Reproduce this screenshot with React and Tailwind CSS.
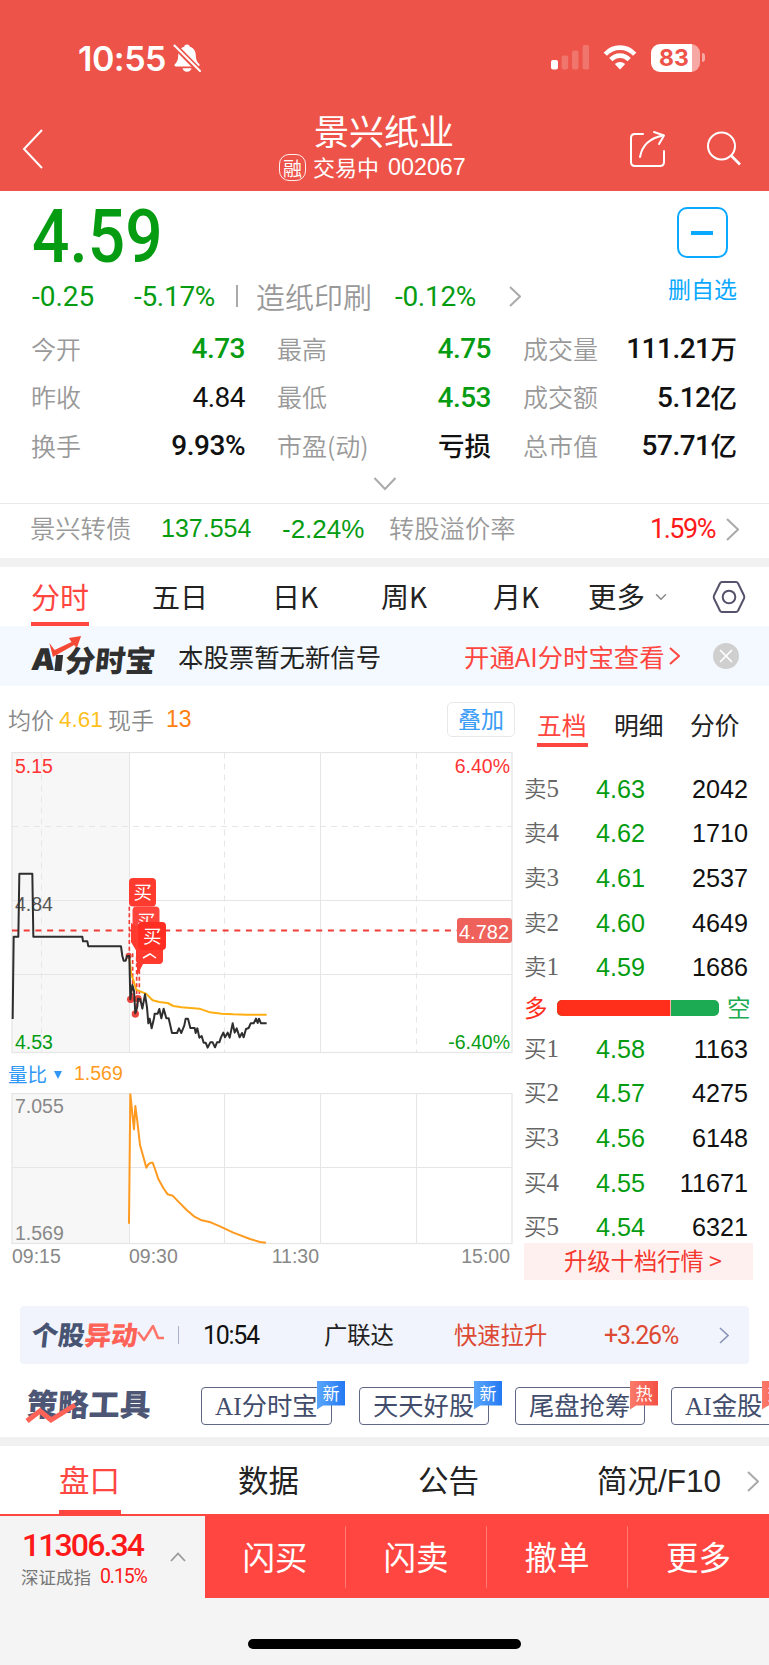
import { ChevronDown, X } from 'lucide-react';

const quoteRows = [
  [
    { label: '今开', value: '4.73', tone: 'text-[#059c12] font-medium' },
    { label: '最高', value: '4.75', tone: 'text-[#059c12] font-medium' },
    { label: '成交量', value: '111.21', unit: '万', tone: 'text-[#111] font-medium' },
  ],
  [
    { label: '昨收', value: '4.84', tone: 'text-[#111]' },
    { label: '最低', value: '4.53', tone: 'text-[#059c12] font-medium' },
    { label: '成交额', value: '5.12', unit: '亿', tone: 'text-[#111] font-medium' },
  ],
  [
    { label: '换手', value: '9.93%', tone: 'text-[#111] font-medium' },
    { label: '市盈(动)', value: '', unit: '亏损', tone: 'text-[#111] font-medium' },
    { label: '总市值', value: '57.71', unit: '亿', tone: 'text-[#111] font-medium' },
  ],
];

const asks = [
  ['5', '4.63', '2042'],
  ['4', '4.62', '1710'],
  ['3', '4.61', '2537'],
  ['2', '4.60', '4649'],
  ['1', '4.59', '1686'],
];

const bids = [
  ['1', '4.58', '1163'],
  ['2', '4.57', '4275'],
  ['3', '4.56', '6148'],
  ['4', '4.55', '11671'],
  ['5', '4.54', '6321'],
];

const tools = [
  { latin: 'AI', name: '分时宝', badge: '新', box: 'w-[131px] mr-[27px]' },
  { latin: '', name: '天天好股', badge: '新', box: 'w-[130px] mr-[26px]' },
  { latin: '', name: '尾盘抢筹', badge: '热', box: 'w-[130px] mr-[26px]' },
  { latin: 'AI', name: '金股', badge: '热', box: 'w-[106px]' },
];

const Arrow = ({ className, w = 12, h = 21, stroke = 2 }) => (
  <svg width={w} height={h} viewBox={`0 0 ${w} ${h}`} fill="none" stroke="currentColor" strokeWidth={stroke} className={`shrink-0 ${className}`}>
    <path d={`M1 1L${w - 1} ${h / 2}L1 ${h - 1}`} />
  </svg>
);

const StatusBar = () => (
  <div className="flex h-[109px] items-center pl-[78px] pt-[6px] text-white">
    <span className="w-[95px] whitespace-nowrap pt-[2px] font-[Inter] text-[34px] font-semibold tracking-[-0.500px]">10:55</span>
    <svg width="28" height="28" viewBox="0 0 28 28" fill="currentColor">
      <path d="M14 0.5C16 .5 16.8 1.7 16.8 2.8C21 4 22.7 7.2 22.8 11.5C23 16 24 18 26.2 20C27 21 26.5 22.5 25 22.5H3C1.5 22.5 1 21 2 20C4.200 18 5 16 5.200 11.500C5.400 7.200 7 4 11.200 2.800C11.200 1.700 12 .5 14 .5Z" />
      <path d="M9.500 24.300H18.500C18 26.500 16.500 27.700 14 27.700S10 26.500 9.500 24.300Z" />
      <path d="M1 1L27 27.500" stroke="#ed5349" strokeWidth="5.500" />
      <path d="M1.500 1.500L27 27" stroke="currentColor" strokeWidth="2" strokeLinecap="round" />
    </svg>
    <svg width="39" height="25" viewBox="0 0 39 25" fill="currentColor" className="ml-[350px]">
      <rect x="0" y="15" width="7" height="9.500" rx="2" />
      <g opacity=".2">
        <rect x="10.700" y="10.500" width="6.500" height="14" rx="2" />
        <rect x="21" y="5.500" width="6.500" height="19" rx="2" />
        <rect x="31.600" y="0" width="6.500" height="24.500" rx="2" />
      </g>
    </svg>
    <svg width="34" height="25" viewBox="0 0 34 25" className="ml-[13px]" fill="none" stroke="currentColor" strokeWidth="4.600">
      <path d="M2.300 9.200C10.500 .4 23.500 .4 31.700 9.200" />
      <path d="M7.800 14.700C13 9.300 21 9.300 26.200 14.700" />
      <path d="M17 24.500L11.800 19.100C14.800 16.300 19.200 16.300 22.200 19.100Z" fill="currentColor" stroke="none" />
    </svg>
    <div className="ml-[14px] flex h-[28px] w-[49px] items-center rounded-[9px] bg-[linear-gradient(90deg,#fff_84%,#f6a9a4_84%)] pl-[8px] pt-px font-[Inter] text-[23px] font-bold text-[#ed5349]">
      83
    </div>
    <div className="ml-[2px] h-[9px] w-[3px] rounded-r-full bg-[#f6a9a4]" />
  </div>
);

const TitleBar = () => (
  <div className="flex h-[82px] items-start text-white">
    <svg width="21" height="40" viewBox="0 0 21 40" fill="none" stroke="currentColor" strokeWidth="2" className="ml-[22px] mt-[20px]">
      <path d="M20 1L2 20L20 39" />
    </svg>
    <div className="ml-[236px] w-[207px]">
      <div className="mb-[4px] pl-[35px] text-[35px] leading-[42px]">景兴纸业</div>
      <div className="flex h-[24px] items-center">
        <span className="flex h-[27px] w-[27px] shrink-0 items-center justify-center rounded-[10px] border border-white/90 text-[19px] leading-none">融</span>
        <span className="mb-[3px] ml-[7px] text-[22px] leading-[24px]">交易中</span>
        <span className="ml-[9px] font-['Liberation_Sans'] text-[23.300px]">002067</span>
      </div>
    </div>
    <svg width="37" height="38" viewBox="0 0 37 38" fill="none" stroke="currentColor" strokeWidth="2" strokeLinejoin="round" strokeLinecap="round" className="ml-[143px] mt-[21px]">
      <path d="M14 4H6Q2 4 2 8V32Q2 36 6 36H31Q35 36 35 32V21" />
      <path d="M11 27C13 16 21 8 34 5.500" />
      <path d="M25 2L35 5.500L30 14" />
    </svg>
    <svg width="36" height="36" viewBox="0 0 36 36" fill="none" stroke="currentColor" strokeWidth="2" className="ml-[40px] mt-[22px]">
      <circle cx="15.500" cy="15" r="13.500" />
      <path d="M25 24.500L34 33.500" strokeWidth="2.600" />
    </svg>
  </div>
);

const Quote = () => (
  <section className="h-[312px] pt-[10px]">
    <div className="flex h-[118px] justify-between pl-[32px]">
      <div>
        <div className="h-[74px] w-[160px] origin-left scale-x-[.89] font-[Roboto] text-[74px] font-medium leading-[72px] text-[#059c12]">4.59</div>
        <div className="flex h-[43px] items-center font-[Roboto] text-[28px] font-[450] text-[#059c12]">
          <span className="w-[102px] pt-px">-0.25</span>
          <span className="w-[102px] pt-px tracking-[-0.300px]">-5.17%</span>
          <span className="mb-[2px] h-[22px] w-[20px] border-l-2 border-[#aaa]" />
          <span className="w-[139px] whitespace-nowrap font-['Noto_Sans_CJK_SC'] text-[29px] font-[350] text-[#999]">造纸印刷</span>
          <span className="w-[114px] pt-px tracking-[-0.300px]">-0.12%</span>
          <Arrow className="text-[#aaa]" />
        </div>
      </div>
      <div className="flex w-[133px] flex-col items-center pt-[6px] text-[#0aa9ff]">
        <div className="mr-px flex h-[51px] w-[51px] items-center justify-center rounded-[10px] border-2 border-[#0aa9ff]">
          <div className="h-[4px] w-[22px] bg-[#0aa9ff]" />
        </div>
        <span className="mt-[15px] text-[23px] leading-[31px]">删自选</span>
      </div>
    </div>
    <div className="mt-[6px]">
      {quoteRows.map((row) => (
        <div key={row[0].label} className="flex h-[48.500px] items-center pl-[31px]">
          {row.map((item) => (
            <div key={item.label} className="mr-[32px] flex w-[214px] items-center justify-between">
              <span className="mb-[2px] whitespace-nowrap text-[25px] font-[350] text-[#999]">{item.label}</span>
              <span className={`flex items-center whitespace-nowrap font-[Roboto] text-[28px] leading-[40px] tracking-[-0.500px] ${item.tone}`}>
                {item.value}
                {item.unit && <span className="mb-[2px] font-['Noto_Sans_CJK_SC'] text-[26.500px] tracking-normal">{item.unit}</span>}
              </span>
            </div>
          ))}
        </div>
      ))}
    </div>
    <svg width="24" height="14" viewBox="0 0 24 14" fill="none" stroke="#aaa" strokeWidth="2" className="mx-auto mt-[6px]">
      <path d="M1.500 1L12 12L22.500 1" />
    </svg>
  </section>
);

const BondRow = () => (
  <section className="flex h-[55px] items-center border-t border-[#e8e8e8] pl-[30px] pb-[4px] text-[25.300px] font-[350] text-[#999]">
    <span className="mb-[2px] w-[131px]">景兴转债</span>
    <span className="w-[121px] font-['Liberation_Sans'] text-[25px] text-[#059c12]">137.554</span>
    <span className="w-[107px] font-['Liberation_Sans'] text-[26px] text-[#059c12]">-2.24%</span>
    <span className="mb-[2px] w-[261px]">转股溢价率</span>
    <span className="w-[76px] font-[Roboto] text-[27px] font-[450] tracking-[-1.500px] text-[#ff1a1a]">1.59%</span>
    <Arrow className="text-[#aaa]" w={13} h={23} />
  </section>
);

const PeriodTabs = () => (
  <nav className="flex h-[59px] pl-[31px] text-[28px] leading-[58px] text-[#222]">
    <div className="mr-[63px] h-[59px] w-[58px] whitespace-nowrap border-b-4 border-[#ff4640] text-[29px] text-[#ff4640]">分时</div>
    <span className="w-[120px]">五日</span>
    <span className="w-[109px]">日K</span>
    <span className="w-[112px]">周K</span>
    <span className="w-[95px]">月K</span>
    <span className="w-[64px] text-[28.500px]">更多</span>
    <ChevronDown size={18} strokeWidth={2} className="mt-[21px] text-[#888]" />
    <svg width="34" height="34" viewBox="0 0 34 34" fill="none" stroke="#55536b" strokeWidth="2" className="ml-[42px] mt-[13px]" strokeLinejoin="round">
      <path d="M10 2H24Q25.300 2 26 3.200L32 15.500Q32.600 17 32 18.500L26 30.800Q25.300 32 24 32H10Q8.700 32 8 30.800L2 18.500Q1.400 17 2 15.500L8 3.200Q8.700 2 10 2Z" />
      <circle cx="17" cy="17" r="6.300" />
    </svg>
  </nav>
);

const SignalBanner = () => (
  <section className="flex h-[60px] items-center bg-[#f3f9fe] pl-[31px]">
    <div className="relative flex h-[40px] w-[147px] -skew-x-6 items-center pt-[6px] font-black text-[#303030]">
      <span className="pl-px font-[Inter] text-[30px]">A</span>
      <span className="mt-[8px] inline-block h-[16px] w-[7px] bg-[#303030]" />
      <span className="ml-[3px] whitespace-nowrap text-[30px]">分时宝</span>
      <svg width="38" height="24" viewBox="0 0 38 24" className="absolute left-[14px] top-0" fill="#f44a35">
        <path d="M3 7L9 14L25 6L22 2L34 0L31 12L28 9L8 21Z" />
      </svg>
    </div>
    <span className="w-[286px] whitespace-nowrap text-[25.400px] text-[#222]">本股票暂无新信号</span>
    <span className="w-[205px] whitespace-nowrap text-[25.400px] text-[#ff4640]">开通AI分时宝查看</span>
    <Arrow className="text-[#ff4640]" w={11} h={18} />
    <span className="ml-[33px] flex h-[26px] w-[26px] items-center justify-center rounded-full bg-[#cfcfcf] text-white">
      <X size={22} strokeWidth={1.800} />
    </span>
  </section>
);

const BuyTag = ({ x, y, opacity = 0.95 }) => (
  <g>
    <rect x={x} y={y} width="27" height="28.500" rx="4" fill="#ff3b30" opacity={opacity} />
    <text x={x + 4.500} y={y + 21} fontSize="18.500" fill="#fff">买</text>
  </g>
);

const PriceChart = () => (
  <svg width="516" height="304" viewBox="0 0 516 304" className="block font-['Liberation_Sans','Noto_Sans_CJK_SC',sans-serif]">
    <rect x="12" y="0.500" width="117" height="300" fill="#f7f7f7" />
    <g fill="none" stroke="#e6e6e6">
      <rect x="12" y="0.500" width="500" height="300" strokeWidth="1.300" />
      <path d="M129.500 .5V300.500M320.500 .5V300.500M12 148.500H512M12 222.500H512" />
      <path d="M41.500 .5V300.500M224.500 .5V300.500M416.500 .5V300.500M12 74.500H512" strokeDasharray="6 5" />
    </g>
    <g fontSize="19.500">
      <text x="15" y="21" fill="#ff3333">5.15</text>
      <text x="510" y="21" fill="#ff3333" textAnchor="end">6.40%</text>
      <text x="15" y="159" fill="#555">4.84</text>
      <text x="15" y="297" fill="#059c12">4.53</text>
      <text x="510" y="297" fill="#059c12" textAnchor="end">-6.40%</text>
    </g>
    <path d="M12 178.500H457" stroke="#f23d36" strokeWidth="2" strokeDasharray="6 5.700" />
    <g transform="translate(0 118) scale(.33333)" fill="none" strokeLinejoin="round">
      <g stroke="#f23d36" strokeWidth="5" strokeDasharray="12 8">
        <path d="M388 110V255M398 250V386M410 260V430M418 280V380" />
      </g>
      <path d="M388 262L394 315L400 330L408 358L420 364L438 371L458 391L478 396L503 399L520 408L545 412L598 416L630 427L665 431L700 433L740 434L800 434" stroke="#ffae12" strokeWidth="6" />
      <g fill="#e8453f">
        <circle cx="386" cy="257" r="9" />
        <circle cx="392" cy="388" r="11" />
        <circle cx="414" cy="386" r="11" />
        <circle cx="406" cy="432" r="11" />
      </g>
      <path d="M38 447L41 200H55L58 11H97L100 200H247L249 214H262L265 229H363L367 258L371 272H377L381 258H388L391 388L397 345L402 362L406 430L412 410L414 386L421 388L427 416L435 373L441 412L445 460L449 446L455 475L462 445L464 431H473L478 417L484 445L491 416L499 445H506L516 489H531L537 475L544 489L553 466L557 446H564L571 474H584L587 489L592 475L598 503L605 498L611 518H617L623 533L631 517H638L645 532L651 517H658L663 502L670 488L675 502L683 488L689 503L698 460L704 488L710 475L719 502L726 489L731 502L738 477L746 474L752 460H761L768 446L773 459L777 446L783 460H800" stroke="#2e2e2e" strokeWidth="6" />
    </g>
    <BuyTag x={129} y={126} opacity={1} />
    <BuyTag x={132.5} y={154.5} />
    <path d="M131 171L164 190L160 212H143L137 224V200L131 190Z" fill="#ff3b30" />
    <rect x="136" y="183" width="27" height="29" rx="4" fill="#ff3b30" />
    <path d="M144 195L150 191L156 195M143 206L150 202L156 206" fill="none" stroke="#fff" strokeWidth="1.500" />
    <rect x="138" y="170" width="28" height="28" rx="4" fill="#ff2d22" />
    <text x="143" y="190.500" fontSize="18.500" fill="#fff">买</text>
    <rect x="457" y="166" width="55" height="25" rx="3" fill="#ef625b" />
    <text x="459" y="186.500" fontSize="20" fill="#fff">4.782</text>
  </svg>
);

const VolumeRatioChart = () => (
  <svg width="516" height="180" viewBox="0 0 516 180" className="block font-['Liberation_Sans']">
    <rect x="12" y="0.500" width="117" height="150" fill="#f7f7f7" />
    <g fill="none" stroke="#e6e6e6">
      <rect x="12" y="0.500" width="500" height="150" strokeWidth="1.300" />
      <path d="M129.500 .5V150.500M224.500 .5V150.500M320.500 .5V150.500M416.500 .5V150.500M12 74.500H512" />
    </g>
    <g fontSize="19.500" fill="#888">
      <text x="15" y="19.500">7.055</text>
      <text x="15" y="147">1.569</text>
      <text x="12" y="169.500">09:15</text>
      <text x="129" y="169.500">09:30</text>
      <text x="319" y="169.500" textAnchor="end">11:30</text>
      <text x="510" y="169.500" textAnchor="end">15:00</text>
    </g>
    <g transform="translate(0 -43) scale(.33333)">
      <path d="M387 521L391 133L402 238L406 168L412 214L420 285L430 320L439 353L445 343L453 338H458L466 360L475 387L490 414L503 433L518 437L535 455L560 480L582 499L605 511L632 517L660 529L700 548L750 567L780 576L798 578" fill="none" stroke="#ff9a20" strokeWidth="6" strokeLinejoin="round" />
    </g>
  </svg>
);

const DepthRow = ({ side, row }) => (
  <div className="flex h-[44.600px] items-center font-['Liberation_Sans'] text-[25.200px]">
    <span className="mb-[3px] flex w-[72px] items-baseline text-[22.500px] leading-[30px] text-[#666]">
      <span className="font-['Noto_Sans_CJK_SC'] font-[350]">{side}</span>
      <span className="font-['Liberation_Serif'] text-[25px]">{row[0]}</span>
    </span>
    <span className="w-[60px] pt-px text-[#059c12]">{row[1]}</span>
    <span className="w-[92px] pt-px text-right text-[#111]">{row[2]}</span>
  </div>
);

const OrderBook = () => (
  <aside className="w-[229px]">
    <div className="flex pl-[13px] pt-[21px] text-[24.800px] leading-[34px] text-[#222]">
      <div className="mr-[26px] h-[40px] w-[51px] whitespace-nowrap border-b-4 border-[#ff4640] text-[#ff4640]">五档</div>
      <span className="w-[76px]">明细</span>
      <span>分价</span>
    </div>
    <div className="pt-[20px]">
      {asks.map((row) => <DepthRow key={row[0]} side="卖" row={row} />)}
      <div className="flex h-[37px] items-center pb-[1px] text-[23.500px]">
        <span className="mb-px w-[33px] text-[#ff2f1c]">多</span>
        <div className="mr-[8px] flex h-[16px] w-[162px] overflow-hidden rounded-[5px] bg-[#1cab52]">
          <div className="w-[114px] border-r border-white/60 bg-[#ff2f1c]" />
        </div>
        <span className="mb-px text-[#1cab52]">空</span>
      </div>
      {bids.map((row) => <DepthRow key={row[0]} side="买" row={row} />)}
    </div>
    <div className="-mt-[7px] h-[37px] bg-[#fff0f0] pl-[40px] text-[23.300px] leading-[35px] text-[#f5382e]">升级十档行情 &gt;</div>
  </aside>
);

const ChartPanel = () => (
  <section className="flex h-[620px]">
    <div className="w-[524px] shrink-0">
      <div className="flex h-[66px] items-center pl-[8px] pt-px text-[23px] font-[350] text-[#888]">
        <span className="w-[51px]">均价</span>
        <span className="w-[49px] font-['Liberation_Sans'] text-[22.500px] text-[#ffc11c]">4.61</span>
        <span className="w-[58px]">现手</span>
        <span className="w-[281px] font-['Liberation_Sans'] text-[23px] text-[#ff8010]">13</span>
        <span className="flex h-[35px] w-[68px] items-center justify-center rounded-[5px] border border-[#e8e8e8] pb-[2px] font-normal text-[#3b9cf5]">叠加</span>
      </div>
      <PriceChart />
      <div className="flex h-[37px] items-center pl-[8px] pb-[2px] text-[19.500px] text-[#2f97f5]">
        <span className="w-[46px]">量比</span>
        <span className="mt-[3px] h-0 w-0 border-x-[4px] border-t-[8px] border-x-transparent border-t-[#2f97f5]" />
        <span className="ml-[12px] font-['Liberation_Sans'] text-[#ff9a20]">1.569</span>
      </div>
      <VolumeRatioChart />
    </div>
    <OrderBook />
  </section>
);

const MoversBar = () => (
  <section className="mx-[20px] flex h-[58px] items-center rounded-[4px] bg-[#f1f4fc] text-[23px]">
    <div className="mb-[2px] ml-[12px] flex w-[101px] -skew-x-6 whitespace-nowrap text-[26.500px] font-black text-[#485473]">
      个股<span className="text-[#ff6257]">异动</span>
    </div>
    <svg width="28" height="22" viewBox="0 0 28 22" fill="none" stroke="#ff7468" strokeWidth="2.500" strokeLinejoin="round" className="ml-[4px]">
      <path d="M1 8L7 16L16 2L21 14H27" />
    </svg>
    <span className="ml-[13px] h-[18px] w-[25px] border-l border-[#a9b1c8]" />
    <span className="w-[121px] pt-[2px] font-[Roboto] text-[25px] font-[450] tracking-[-1.300px] text-[#111]">10:54</span>
    <span className="mb-[2px] w-[130px] text-[23.300px] text-[#222]">广联达</span>
    <span className="mb-[2px] w-[150px] text-[23.300px] text-[#dd4a33]">快速拉升</span>
    <span className="w-[115px] pt-[2px] font-[Roboto] text-[25px] font-[450] tracking-[-1.200px] text-[#dd4a33]">+3.26%</span>
    <Arrow className="text-[#8a94b8]" w={10} h={17} stroke={1.600} />
  </section>
);

const ToolsRow = () => (
  <section className="flex h-[73px] items-center overflow-hidden pt-[10px]">
    <div className="relative mb-[5px] ml-[27px] w-[174px] shrink-0 text-[31px] font-black leading-[36px] text-[#4d5674]">
      <div className="-skew-x-3 whitespace-nowrap">策略工具</div>
      <svg width="54" height="30" viewBox="0 0 54 30" className="absolute -left-[2px] top-[10px]" fill="none" stroke="#ff6257" strokeWidth="5">
        <path d="M2 26L15 16L26 25L50 10" />
      </svg>
    </div>
    {tools.map((tool) => (
      <div key={tool.name} className={`relative flex h-[38px] shrink-0 items-center rounded-[4px] border-[1.500px] border-[#5f6986] pl-[13px] ${tool.box}`}>
        <span className="mb-px whitespace-nowrap text-[25.300px] leading-[34px] text-[#424c6b]">
          <span className="font-['Liberation_Serif']">{tool.latin}</span>{tool.name}
        </span>
        <span className={`absolute -right-[14px] -top-[7px] flex h-[29px] w-[28px] justify-center text-[17px] leading-[23px] text-white [clip-path:polygon(0_0,100%_0,100%_86%,22%_86%,0_100%)] ${tool.badge === '新' ? 'bg-[linear-gradient(90deg,#5ba6fb,#2379f2)]' : 'bg-[linear-gradient(90deg,#fb7a6a,#f45246)]'}`}>
          {tool.badge}
        </span>
      </div>
    ))}
  </section>
);

const InfoTabs = () => (
  <nav className="flex h-[68px] items-start pl-[59px] text-[30.500px] leading-[66px] text-[#222]">
    <div className="mr-[117px] h-[68px] w-[62px] border-b-4 border-[#ff4640] text-[#ff4640]">盘口</div>
    <span className="w-[180px]">数据</span>
    <span className="w-[179px]">公告</span>
    <span className="w-[150px] whitespace-nowrap">简况<span className="font-['Liberation_Sans'] text-[31.500px]">/F10</span></span>
    <Arrow className="mt-[25px] text-[#aaa]" />
  </nav>
);

const BottomBar = () => (
  <footer className="flex h-[84px] border-t-[2px] border-[#ff4640] bg-[#ff4640] text-white">
    <div className="flex w-[205px] shrink-0 items-center bg-[#f4f4f4] pl-[21px]">
      <div className="w-[149px]">
        <div className="pl-[1px] pt-[2px] font-[Roboto] text-[32px] font-medium leading-[38px] tracking-[-1.900px] text-[#ff1a1a]">11306.34</div>
        <div className="flex items-center text-[17.500px] leading-[26px] text-[#777]">
          <span className="w-[79px]">深证成指</span>
          <span className="font-[Roboto] text-[19.500px] font-[450] tracking-[-1.100px] text-[#ff1a1a]">0.15%</span>
        </div>
      </div>
      <svg width="16" height="10" viewBox="0 0 16 10" fill="none" stroke="#999" strokeWidth="1.800">
        <path d="M1 9L8 1.500L15 9" />
      </svg>
    </div>
    <div className="grid flex-1 grid-cols-[140px_141px_141px_142px] items-center text-center text-[32.500px] leading-[59px]">
      <span className="h-[62px]">闪买</span>
      <span className="h-[62px] border-l border-[#ff7a75]">闪卖</span>
      <span className="h-[62px] border-l border-[#ff7a75]">撤单</span>
      <span className="h-[62px] border-l border-[#ff7a75]">更多</span>
    </div>
  </footer>
);

export default function App() {
  return (
    <div className="h-[1665px] w-[769px] overflow-hidden bg-white font-['Noto_Sans_CJK_SC',sans-serif]">
      <header className="bg-[#ed5349]">
        <StatusBar />
        <TitleBar />
      </header>
      <Quote />
      <BondRow />
      <div className="h-[9px] bg-[#f1f1f1]" />
      <PeriodTabs />
      <SignalBanner />
      <ChartPanel />
      <MoversBar />
      <ToolsRow />
      <div className="h-[9px] bg-[#f1f1f1]" />
      <InfoTabs />
      <BottomBar />
      <div className="flex h-[67px] justify-center bg-[#f4f4f4] pt-[41px]">
        <div className="h-[10px] w-[273px] rounded-full bg-black" />
      </div>
    </div>
  );
}
